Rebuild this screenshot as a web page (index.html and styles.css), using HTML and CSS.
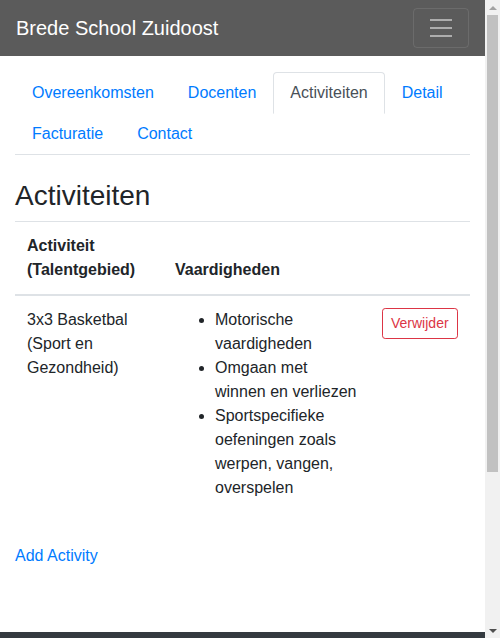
FILE: index.html
```html
<!DOCTYPE html>
<html lang="nl">
<head>
<meta charset="utf-8">
<title>Brede School Zuidoost</title>
<link rel="stylesheet" href="styles.css">
</head>
<body>
<nav class="navbar">
  <a class="brand" href="#">Brede School Zuidoost</a>
  <button class="toggler" type="button" aria-label="Menu">
    <svg class="toggler-icon" width="30" height="30" viewBox="0 0 30 30"><path d="M4 7h22M4 15h22M4 23h22" stroke="rgba(255,255,255,0.5)" stroke-width="2" stroke-linecap="butt" fill="none"/></svg>
  </button>
</nav>
<main class="container">
  <ul class="tabs">
    <li class="tab-item"><a class="tab-link" href="#">Overeenkomsten</a></li>
    <li class="tab-item"><a class="tab-link" href="#">Docenten</a></li>
    <li class="tab-item"><a class="tab-link active" href="#">Activiteiten</a></li>
    <li class="tab-item"><a class="tab-link" href="#">Detail</a></li>
    <li class="tab-item"><a class="tab-link" href="#">Facturatie</a></li>
    <li class="tab-item"><a class="tab-link" href="#">Contact</a></li>
  </ul>
  <h3 class="title">Activiteiten</h3>
  <table class="table">
    <thead>
      <tr>
        <th class="col-act">Activiteit (Talentgebied)</th>
        <th class="col-skill">Vaardigheden</th>
        <th class="col-btn"></th>
      </tr>
    </thead>
    <tbody>
      <tr>
        <td>3x3 Basketbal (Sport en Gezondheid)</td>
        <td>
          <ul class="skills">
            <li>Motorische vaardigheden</li>
            <li>Omgaan met winnen en verliezen</li>
            <li>Sportspecifieke oefeningen zoals werpen, vangen, overspelen</li>
          </ul>
        </td>
        <td><button class="btn-danger" type="button">Verwijder</button></td>
      </tr>
    </tbody>
  </table>
  <div class="add-wrap"><a class="add-link" href="#">Add Activity</a></div>
</main>
<footer class="footer"></footer>
<div class="scrollbar" aria-hidden="true">
  <div class="sb-btn"><span class="arrow-up"></span></div>
  <div class="sb-track"><div class="sb-thumb"></div></div>
  <div class="sb-btn"><span class="arrow-down"></span></div>
</div>
</body>
</html>
```

FILE: styles.css
```css
* { box-sizing: border-box; }
html, body { margin: 0; padding: 0; }
body {
  font-family: "Liberation Sans", Arial, sans-serif;
  font-size: 16px;
  line-height: 1.5;
  color: #212529;
  background: #fff;
  margin-right: 15px;
}
a { color: #007bff; text-decoration: none; }

.navbar {
  display: flex;
  align-items: center;
  justify-content: space-between;
  padding: 8px 16px;
  background: #5b5b5b;
  height: 56px;
}
.brand {
  color: #fff;
  font-size: 20px;
  line-height: 30px;
  padding: 5px 0;
}
.toggler {
  width: 56px;
  height: 40px;
  padding: 4px 12px;
  background: transparent;
  border: 1px solid rgba(255,255,255,0.1);
  border-radius: 4px;
  display: flex;
  align-items: center;
  justify-content: center;
}
.toggler-icon { display: block; }

.container {
  padding: 0 15px;
}
.tabs {
  list-style: none;
  margin: 16px 0 0;
  padding: 0;
  display: flex;
  flex-wrap: wrap;
  border-bottom: 1px solid #dee2e6;
}
.tab-item { margin-bottom: -1px; }
.tab-link {
  display: block;
  padding: 8px 16px;
  border: 1px solid transparent;
  border-top-left-radius: 4px;
  border-top-right-radius: 4px;
  line-height: 24px;
}
.tab-link.active {
  color: #495057;
  background: #fff;
  border-color: #dee2e6 #dee2e6 #fff;
}

.title {
  font-size: 28px;
  font-weight: 500;
  line-height: 1.2;
  margin: 24px 0 8px;
}

.table {
  width: 100%;
  border-collapse: collapse;
  table-layout: fixed;
  margin-bottom: 16px;
}
.table th, .table td {
  padding: 12px;
  border-top: 1px solid #dee2e6;
  vertical-align: top;
  text-align: left;
}
.table thead th {
  vertical-align: bottom;
  border-bottom: 2px solid #dee2e6;
  font-weight: bold;
}
.col-act { width: 148px; }
.col-skill { width: 207px; }
.col-btn { width: 100px; }
.skills {
  margin: 0 0 16px;
  padding-left: 40px;
}
.btn-danger {
  font-family: inherit;
  font-size: 14px;
  line-height: 21px;
  padding: 4px 8px;
  color: #dc3545;
  background: transparent;
  border: 1px solid #dc3545;
  border-radius: 3.2px;
  display: inline-block;
}
.add-wrap {
  padding-bottom: 64px;
}
.footer {
  background: #343a40;
  height: 217px;
}

/* imitation of the browser's vertical scrollbar */
.scrollbar {
  position: fixed;
  top: 0;
  right: 0;
  width: 15px;
  height: 100vh;
  background: #f1f1f1;
  display: flex;
  flex-direction: column;
}
.sb-btn {
  height: 15px;
  display: flex;
  align-items: center;
  justify-content: center;
}
.arrow-up {
  width: 0;
  height: 0;
  border-left: 4px solid transparent;
  border-right: 4px solid transparent;
  border-bottom: 4px solid #a3a3a3;
}
.arrow-down {
  width: 0;
  height: 0;
  border-left: 4px solid transparent;
  border-right: 4px solid transparent;
  border-top: 4px solid #505050;
}
.sb-track {
  flex: 1;
  padding: 0 2px;
}
.sb-thumb {
  height: 457px;
  background: #c1c1c1;
}
```
